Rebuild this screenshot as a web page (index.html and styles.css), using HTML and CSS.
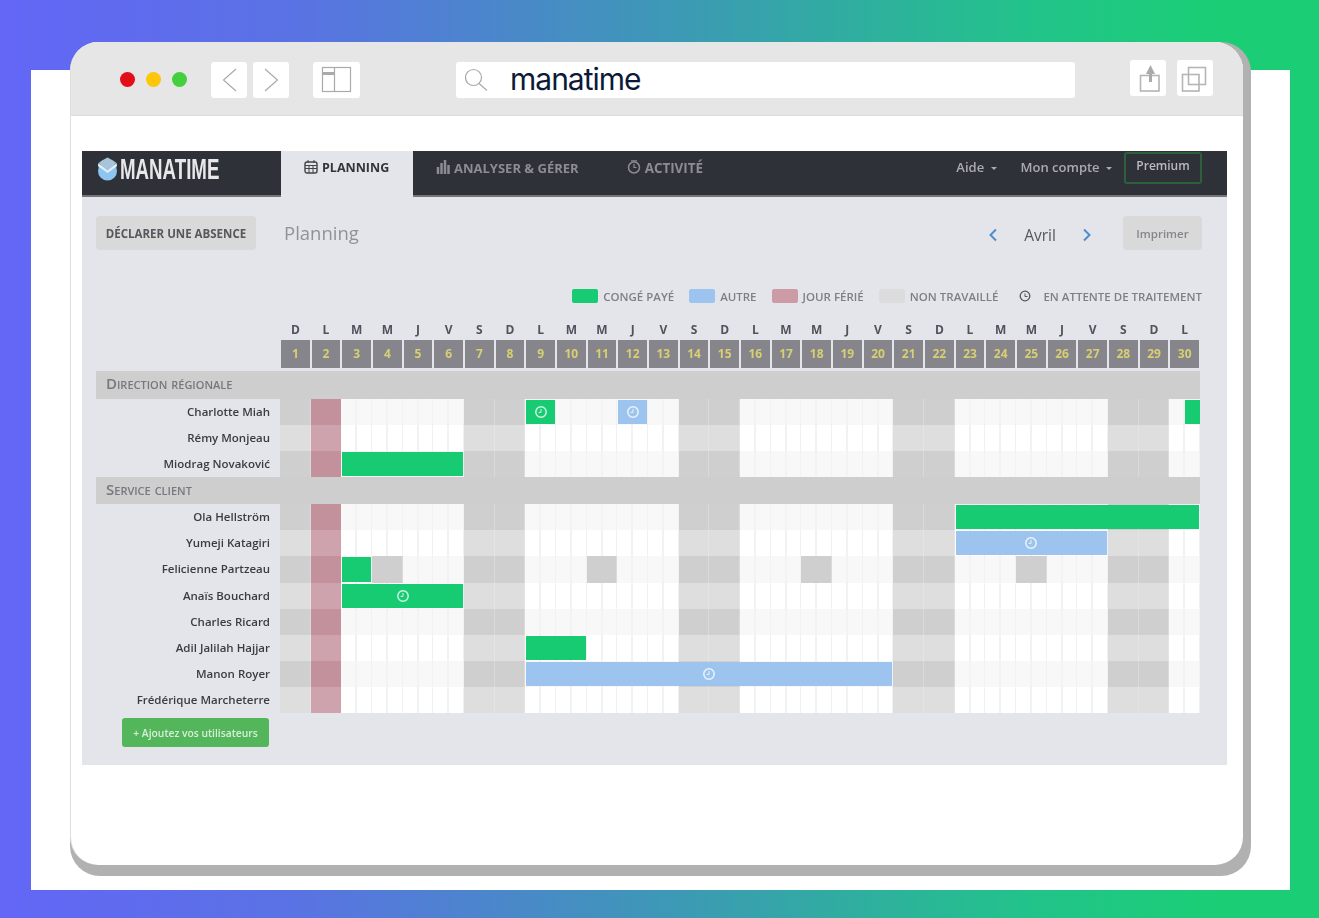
FILE: index.html
```html
<!DOCTYPE html>
<html lang="fr">
<head>
    <meta charset="UTF-8">
    <title>Manatime - Planning</title>
    <link rel="stylesheet" href="styles.css">
</head>
<body>
    <section class="panel">
        <div class="browser">
            <div class="window">
                <header class="toolbar">
                    <span class="light red"></span>
                    <span class="light yellow"></span>
                    <span class="light green"></span>
                    <span class="tool back">
                        <svg width="36" height="36" viewBox="0 0 36 36"><path d="M25 7 12.500 18 25 29" class="line"/></svg>
                    </span>
                    <span class="tool forward">
                        <svg width="36" height="36" viewBox="0 0 36 36"><path d="M12 7l12.500 11L12 29" class="line"/></svg>
                    </span>
                    <span class="tool side">
                        <svg width="47" height="36" viewBox="0 0 47 36"><rect x="9.500" y="5.500" width="28" height="24" class="line"/><path d="M21.500 5.500v24" class="line"/><rect x="10" y="10" width="11" height="3" fill="#aaa"/></svg>
                    </span>
                    <div class="address">
                        <svg width="26" height="26" viewBox="0 0 26 26"><circle cx="8.500" cy="10.500" r="8" class="line"/><path d="M14 16.500l8 7" class="line"/></svg>
                        <span class="url">manatime</span>
                    </div>
                    <span class="tool up share">
                        <svg width="36" height="36" viewBox="0 0 36 36"><rect x="10.500" y="15.500" width="18.500" height="15.500" class="line thick"/><path d="M20.500 13v9" class="line stem"/><path d="M16 14l4.500-9 4.500 9z" fill="#aaa"/></svg>
                    </span>
                    <span class="tool up copy">
                        <svg width="36" height="36" viewBox="0 0 36 36"><rect x="11.500" y="7.500" width="17" height="17" class="line thick"/><rect x="5.500" y="14.500" width="16.500" height="16.500" fill="#fff" class="line thick"/></svg>
                    </span>
                </header>

                <div class="page">
                    <main class="app">
                        <nav class="topnav">
                            <div class="brand">
                                <svg width="21" height="24" viewBox="0 0 21 24"><circle cx="10.500" cy="14" r="9.500" fill="#8cc6f0"/><path d="M1 6 10.500 13 20 6l-1 6-8.500 6L2 12z" fill="#8cc6f0"/><path d="M1.500 6.500 10.500 13.500 19.500 6.500 20 9 10.500 16 1 9z" fill="#e8eef3"/><path d="M5 3.500 10.500 .5 16 3.500 19.500 6 10.500 12.500 1.500 6z" fill="#a9c4d8"/></svg>
                                <span class="brand-name">MANATIME</span>
                            </div>
                            <a class="tab active">
                                <svg width="14" height="14" viewBox="0 0 14 14"><rect x="1" y="2" width="12" height="11" rx="2" fill="none" stroke="#444" stroke-width="1.400"/><path d="M1 5.500h12M1 8.500h12M5 5v8M9 5v8M4 0v3M10 0v3" stroke="#444"/></svg>
                                PLANNING
                            </a>
                            <a class="tab analyse">
                                <svg width="15" height="14" viewBox="0 0 15 14"><path d="M2 14V7M5.500 14V3M9 14V0M12.500 14V5" stroke="#8b8d93" stroke-width="2.500"/></svg>
                                ANALYSER &amp; GÉRER
                            </a>
                            <a class="tab activity">
                                <svg width="14" height="14" viewBox="0 0 14 14"><circle cx="7" cy="7.500" r="5.500" fill="none" stroke="#8b8d93" stroke-width="1.500"/><path d="M7 4v3.500h2.500M4 .8h6" fill="none" stroke="#8b8d93" stroke-width="1.200"/></svg>
                                ACTIVITÉ
                            </a>
                            <div class="nav-right">
                                <a class="menu aide">Aide <i class="caret"></i></a>
                                <a class="menu">Mon compte <i class="caret"></i></a>
                                <a class="premium">Premium</a>
                            </div>
                        </nav>

                        <div class="actions">
                            <button class="btn declare">DÉCLARER UNE ABSENCE</button>
                            <h1 class="title">Planning</h1>
                            <div class="month">
                                <svg width="10" height="14" viewBox="0 0 10 14"><path d="M8 1.500 2.500 7 8 12.500" fill="none" stroke="#4f8fc9" stroke-width="2"/></svg>
                                <span class="month-name">Avril</span>
                                <svg width="10" height="14" viewBox="0 0 10 14"><path d="M2 1.500 7.500 7 2 12.500" fill="none" stroke="#4f8fc9" stroke-width="2"/></svg>
                            </div>
                            <button class="btn print">Imprimer</button>
                        </div>

                        <ul class="legend">
                            <li><i class="swatch paid"></i>CONGÉ PAYÉ</li>
                            <li><i class="swatch other"></i>AUTRE</li>
                            <li><i class="swatch holiday"></i>JOUR FÉRIÉ</li>
                            <li><i class="swatch off"></i>NON TRAVAILLÉ</li>
                            <li class="waiting">
                                <svg width="12" height="12" viewBox="0 0 12 12"><circle cx="6" cy="6" r="4.800" fill="none" stroke="#55575f" stroke-width="1.300"/><path d="M6 3.500V6.500H8.500" fill="none" stroke="#55575f"/></svg>
                                EN ATTENTE DE TRAITEMENT
                            </li>
                        </ul>

                        <div id="sheet" class="sheet"></div>

                        <button class="add-users">+ Ajoutez vos utilisateurs</button>
                    </main>
                </div>
            </div>
        </div>
    </section>
    <script src="script.js"></script>
</body>
</html>
```

FILE: styles.css
```css
* {
    box-sizing: border-box;
}

body {
    margin: 0;
    height: 918px;
    padding: 70px 29px 28px 31px;
    overflow: hidden;
    font-family: "Open Sans", Arial, sans-serif;
    background: linear-gradient(90deg, #6366f6 0%, #5a72e4 22%, #3c9ab4 52%, #22c38a 78%, #1bce76 92%);
}

.panel {
    display: flow-root;
    height: 820px;
    background: #fff;
    padding-left: 39px;
}

/* grey offset behind the window */
.browser {
    width: 1181px;
    height: 834px;
    margin-top: -28px;
    padding: 0 8px 11px 0;
    background: #b1b1b1;
    border-radius: 30px;
}

.window {
    height: 823px;
    background: #fff;
    border-radius: 28px;
    overflow: hidden;
    border-left: 1px solid #dedede;
}

.toolbar {
    display: flex;
    align-items: flex-start;
    height: 74px;
    padding: 20px 0 0 49px;
    background: #e6e6e6;
    border-bottom: 1px solid #dcdcdc;
}

.light {
    width: 15px;
    height: 15px;
    margin: 10px 11px 0 0;
    border-radius: 50%;
}

.red { background: #e30f18; }
.yellow { background: #fdc60a; }
.green { background: #44cf3c; margin-right: 0; }

.tool {
    display: block;
    width: 36px;
    height: 36px;
    background: #fff;
    border-radius: 3px;
}

.tool svg {
    display: block;
}

.line {
    fill: none;
    stroke: #aaa;
    stroke-width: 1.200;
}

.line.thick {
    stroke: #b5b5b5;
    stroke-width: 1.600;
}

.line.stem {
    stroke-width: 3;
}

.back { margin-left: 24px; }
.forward { margin-left: 6px; }
.side { margin-left: 24px; width: 47px; }

.address {
    display: flex;
    align-items: center;
    width: 619px;
    height: 36px;
    margin-left: 96px;
    padding-left: 9px;
    background: #fff;
    border-radius: 3px;
}

.url {
    margin-left: 19px;
    font-family: Inter, sans-serif;
    font-size: 30px;
    letter-spacing: -1px;
    line-height: 32px;
    margin-top: -3px;
    color: #0c1a38;
}

.up {
    margin-top: -2px;
}

.share { margin-left: 55px; }
.copy { margin-left: 11px; }

.page {
    padding: 35px 0 0 11px;
}

.app {
    width: 1145px;
    height: 614px;
    background: #e4e5ea;
    filter: blur(0.7px);
}

.topnav {
    display: flex;
    height: 46px;
    background: #2f3138;
    border-bottom: 2px solid #74757a;
    font-size: 13px;
    font-weight: 700;
    color: #8b8d93;
}

.brand {
    display: flex;
    align-items: center;
    gap: 2px;
    width: 199px;
    padding: 0 0 8px 15px;
}

.brand-name {
    font-family: "Liberation Sans", sans-serif;
    font-size: 29px;
    font-weight: 700;
    line-height: 32px;
    color: #e8e8ea;
    transform: scaleX(0.645);
    transform-origin: left center;
}

.tab {
    display: flex;
    align-items: flex-start;
    gap: 3px;
    padding-top: 8px;
    line-height: 18px;
}

.tab svg {
    margin-top: 1px;
}

.tab.active {
    width: 132px;
    height: 46px;
    padding-left: 23px;
    background: #e4e5ea;
    color: #33353b;
    font-size: 12.500px;
    gap: 4px;
}

.analyse { margin-left: 23px; }
.activity { margin-left: 48px; gap: 4px; font-size: 13.400px; }

.nav-right {
    display: flex;
    align-items: flex-start;
    margin-left: auto;
    margin-right: 25px;
    font-weight: 600;
    color: #a9abb0;
}

.menu {
    margin: 7px 12px 0 0;
    line-height: 18px;
}

.aide {
    margin-right: 24px;
}

.caret {
    display: inline-block;
    margin-left: 3px;
    border: 3.500px solid transparent;
    border-top-color: #a9abb0;
    border-bottom-width: 0;
    vertical-align: 2px;
}

.premium {
    width: 78px;
    height: 32px;
    margin-top: 1px;
    border: 2px solid #2f5f3a;
    border-radius: 3px;
    font-size: 12px;
    text-align: center;
    line-height: 24px;
    color: #b9bbbf;
}

.actions {
    display: flex;
    align-items: flex-start;
    padding: 19px 25px 0 14px;
}

.btn {
    height: 34px;
    border: none;
    border-radius: 4px;
    background: #d9d9d9;
    font-family: inherit;
    font-weight: 700;
}

.declare {
    width: 160px;
    padding: 0;
    font-size: 11.500px;
    color: #56575d;
}

.title {
    margin: 3px 0 0 28px;
    font-size: 18.500px;
    font-weight: 400;
    line-height: 28px;
    color: #909298;
}

.month {
    display: flex;
    align-items: center;
    margin: 5px 0 0 auto;
    height: 28px;
}

.month-name {
    width: 84px;
    text-align: center;
    font-size: 15.500px;
    color: #55575f;
}

.print {
    width: 79px;
    margin-left: 31px;
    font-size: 11.500px;
    font-weight: 600;
    color: #85868c;
}

.legend {
    display: flex;
    justify-content: flex-end;
    align-items: center;
    height: 14px;
    margin: 39px 25px 0 0;
    padding: 0;
    list-style: none;
    font-size: 11.500px;
    font-weight: 600;
    color: #7d7f87;
}

.legend li {
    display: flex;
    align-items: center;
    margin-left: 15px;
}

.swatch {
    width: 26px;
    height: 14px;
    margin-right: 5px;
    border-radius: 2px;
}

.paid { background: #17cb72; }
.other { background: #9cc4ee; }
.holiday { background: #cc9ba5; }
.off { background: #dcdcdc; }

.waiting {
    gap: 12px;
    margin-left: 21px !important;
}

.sheet {
    width: 1104px;
    margin: 19px 0 0 14px;
}

.row {
    display: grid;
    grid-template-columns: 184px repeat(30, 1fr);
    height: 26.100px;
}

.letters {
    height: 16px;
    font-size: 12px;
    font-weight: 700;
    line-height: 16px;
    text-align: center;
    color: #50535e;
}

.numbers {
    height: 28px;
    margin: 2px 0 3px;
}

.num {
    margin: 0 1px;
    background: #85858b;
    font-size: 12px;
    font-weight: 700;
    line-height: 28px;
    text-align: center;
    color: #d8cf72;
}

.group {
    height: 27.500px;
    padding-left: 10px;
    background: #cecece;
    font-size: 15px;
    font-variant: small-caps;
    font-weight: 600;
    line-height: 25px;
    color: #77787e;
}

.name {
    padding-right: 10px;
    font-size: 11.500px;
    font-weight: 600;
    line-height: 25px;
    text-align: right;
    color: #3a3c44;
    white-space: nowrap;
}

.cell {
    grid-row: 1;
    border-right: 1px solid #f0f1f4;
    background: linear-gradient(90deg, #fff 48%, #f1f2f5 48%, #f1f2f5 54%, #fff 54%);
}

.shade .cell {
    border-right-color: #f1f2f4;
    background: linear-gradient(90deg, #f8f8f8 48%, #f2f3f5 48%, #f2f3f5 54%, #f8f8f8 54%);
}

.cell.weekend {
    background: #dedede;
    border-right-color: #e4e4e4;
}

.shade .cell.weekend,
.shade .cell.absent {
    background: #cfcfcf;
    border-right-color: #dadada;
}

.cell.ferie {
    background: #cfa3ad;
    border-right-color: #cfa3ad;
}

.shade .cell.ferie {
    background: #c2919b;
    border-right-color: #c2919b;
}

.bar {
    grid-row: 1;
    z-index: 1;
    display: flex;
    align-items: center;
    justify-content: center;
    margin: 1px;
}

.bar.paid-bar { background: #17cb72; }
.bar.other-bar { background: #9cc4ee; }

.bar.pm {
    margin-left: 50%;
    margin-right: 0;
}

.add-users {
    display: block;
    width: 147px;
    height: 29px;
    margin: 5px 0 0 40px;
    padding: 0;
    border: none;
    border-radius: 3px;
    background: #54b65a;
    font-family: inherit;
    font-size: 10.300px;
    font-weight: 600;
    color: #d8eed9;
}
```

FILE: script.js
```js
// Planning data for april
var letters = 'DLMMJVSDLMMJVSDLMMJVSDLMMJVSDL';
var clock = '<svg width="14" height="14" viewBox="0 0 14 14"><circle cx="7" cy="7" r="5.2" fill="none" stroke="#fff" stroke-opacity=".8" stroke-width="1.5"/><path d="M7 4v3.400H4.600" fill="none" stroke="#fff" stroke-opacity=".8"/></svg>';

var groups = [
    { title: 'Direction régionale', people: [
        { name: 'Charlotte Miah', bars: [[9, 9, 'paid', true], [12, 12, 'other', true], [30, 30, 'paid', false, true]] },
        { name: 'Rémy Monjeau', bars: [] },
        { name: 'Miodrag Novaković', bars: [[3, 6, 'paid']] }
    ] },
    { title: 'Service client', people: [
        { name: 'Ola Hellström', bars: [[23, 30, 'paid']] },
        { name: 'Yumeji Katagiri', bars: [[23, 27, 'other', true]] },
        { name: 'Felicienne Partzeau', bars: [[3, 3, 'paid']], absent: [4, 11, 18, 25] },
        { name: 'Anaïs Bouchard', bars: [[3, 6, 'paid', true]] },
        { name: 'Charles Ricard', bars: [] },
        { name: 'Adil Jalilah Hajjar', bars: [[9, 10, 'paid']] },
        { name: 'Manon Royer', bars: [[9, 20, 'other', true]] },
        { name: 'Frédérique Marcheterre', bars: [] }
    ] }
];

var sheet = document.getElementById('sheet');

function addRow(className) {
    var row = document.createElement('div');
    row.className = 'row ' + className;
    row.appendChild(document.createElement('span'));
    sheet.appendChild(row);
    return row;
}

// Day letters and numbers
var letterRow = addRow('letters');
var numberRow = addRow('numbers');
for (var d = 1; d <= 30; d++) {
    var l = document.createElement('span');
    l.textContent = letters[d - 1];
    letterRow.appendChild(l);
    var n = document.createElement('span');
    n.className = 'num';
    n.textContent = d;
    numberRow.appendChild(n);
}

groups.forEach(function (group) {
    var head = document.createElement('div');
    head.className = 'group';
    head.textContent = group.title;
    sheet.appendChild(head);

    group.people.forEach(function (person, i) {
        var row = document.createElement('div');
        row.className = i % 2 === 0 ? 'row shade' : 'row';

        var name = document.createElement('span');
        name.className = 'name';
        name.textContent = person.name;
        row.appendChild(name);

        for (var day = 1; day <= 30; day++) {
            var cell = document.createElement('span');
            var weekday = (day - 1) % 7;
            cell.className = 'cell';
            if (weekday === 0 || weekday === 6) cell.className += ' weekend';
            if (day === 2) cell.className += ' ferie';
            if (person.absent && person.absent.indexOf(day) > -1) cell.className += ' absent';
            cell.style.gridColumn = day + 1;
            row.appendChild(cell);
        }

        person.bars.forEach(function (b) {
            var bar = document.createElement('span');
            bar.className = 'bar ' + b[2] + '-bar' + (b[4] ? ' pm' : '');
            bar.style.gridColumn = (b[0] + 1) + ' / ' + (b[1] + 2);
            if (b[3]) bar.innerHTML = clock;
            row.appendChild(bar);
        });

        sheet.appendChild(row);
    });
});
```
